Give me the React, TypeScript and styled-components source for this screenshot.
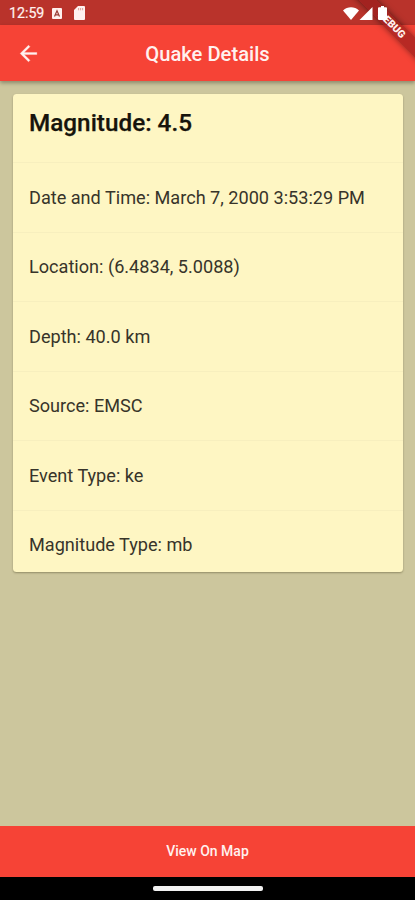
import React from 'react';
import styled, { createGlobalStyle } from 'styled-components';

const GlobalStyle = createGlobalStyle`
  * { box-sizing: border-box; }
  body { margin: 0; font-family: Roboto, 'Liberation Sans', sans-serif; }
`;

const Screen = styled.div`
  position: relative;
  display: flex;
  flex-direction: column;
  width: 415px;
  height: 900px;
  overflow: hidden;
  background: #ccc69d;
`;

const StatusBar = styled.div`
  display: flex;
  align-items: center;
  height: 25px;
  padding: 1px 28px 0 9px;
  background: #b9332b;
  color: #fff1ef;
`;

const Clock = styled.span`
  width: 43px;
  font-size: 14.2px;
  line-height: 20px;
  white-space: nowrap;
  -webkit-text-stroke: 0.2px #fff1ef;
`;

const StatusIcon = styled.svg<{ $left: number }>`
  position: relative;
  z-index: 3;
  display: block;
  flex: none;
  margin-left: ${(p) => p.$left}px;
`;

const Spacer = styled.div`
  flex: 1;
`;

const AppBar = styled.header`
  display: grid;
  grid-template-columns: 57px 1fr 57px;
  align-items: center;
  height: 56px;
  background: #f64336;
  box-shadow: 0 2px 4px rgba(0, 0, 0, 0.32);
  z-index: 1;
`;

const BackButton = styled.button`
  display: flex;
  align-items: center;
  justify-content: center;
  height: 56px;
  padding: 0;
  border: 0;
  background: none;
`;

const Title = styled.h1`
  margin: 0;
  padding-top: 1px;
  color: #fff1ef;
  font-size: 20.2px;
  font-weight: 500;
  line-height: 24px;
  text-align: center;
  white-space: nowrap;
`;

const Content = styled.main`
  flex: 1;
  padding: 13px 12px 0 13px;
`;

const Card = styled.section`
  height: 478px;
  border-radius: 3.5px;
  background: #fef6c3;
  box-shadow: 0 1px 2px rgba(60, 55, 20, 0.4);
  overflow: hidden;
`;

const Heading = styled.h2`
  margin: 0;
  height: 68px;
  padding: 14px 16px 0;
  color: #16140c;
  font-size: 24.3px;
  font-weight: 500;
  line-height: 30px;
  -webkit-text-stroke: 0.25px #16140c;
`;

const Row = styled.div`
  height: 69.6px;
  padding: 22.5px 16px 0;
  border-top: 1px solid #f7efbe;
  color: #37342a;
  font-size: 18.13px;
  line-height: 24px;
  white-space: nowrap;
`;

const MapButton = styled.button`
  height: 51px;
  padding: 0 0 1px;
  border: 0;
  background: #f64336;
  color: #fff1ef;
  font-family: inherit;
  font-size: 14px;
  font-weight: 500;
`;

const NavigationBar = styled.div`
  display: flex;
  justify-content: center;
  height: 23px;
  padding-top: 9px;
  background: #000;
`;

const HomeHandle = styled.div`
  width: 110px;
  height: 5px;
  border-radius: 2px;
  background: #f2f2f2;
`;

const DebugCorner = styled.div`
  position: absolute;
  top: 0;
  right: 0;
  width: 75px;
  height: 75px;
  overflow: hidden;
  z-index: 2;
`;

const DebugRibbon = styled.div`
  position: absolute;
  top: 17.5px;
  left: 1.5px;
  width: 100px;
  height: 13px;
  background: rgba(150, 28, 28, 0.66);
  box-shadow: 0 0 6px rgba(0, 0, 0, 0.5);
  color: #fff1ef;
  font-size: 10.4px;
  font-weight: 900;
  line-height: 13px;
  text-align: center;
  transform: rotate(45deg);
`;

const details = [
  'Date and Time: March 7, 2000 3:53:29 PM',
  'Location: (6.4834, 5.0088)',
  'Depth: 40.0 km',
  'Source: EMSC',
  'Event Type: ke',
  'Magnitude Type: mb',
];

export default function App() {
  return (
    <>
      <GlobalStyle />
      <Screen>
        <StatusBar>
          <Clock>12:59</Clock>
          <StatusIcon $left={0} width="10" height="11" viewBox="0 0 10 11">
            <rect width="10" height="11" rx="1" fill="#fff1ef" />
            <path d="M2.5 8.5 5 2.7l2.5 5.8M3.3 6.8h3.4" fill="none" stroke="#9a3d36" strokeWidth="1.2" />
          </StatusIcon>
          <StatusIcon $left={12} width="11" height="14" viewBox="0 0 11 14">
            <path d="M4 0h6q1 0 1 1v12q0 1-1 1H1q-1 0-1-1V4Z" fill="#fff1ef" />
            <path d="M4.6 2v2.3M6.6 2v2.3M8.6 2v2.3" stroke="#d99b94" strokeWidth=".9" />
          </StatusIcon>
          <Spacer />
          <StatusIcon $left={0} width="16" height="13" viewBox="0 0 16 13">
            <path d="M0 3.500C4.500-.9 11.500-.9 16 3.500L8 13Z" fill="#fff" />
          </StatusIcon>
          <StatusIcon $left={0} width="14" height="13" viewBox="0 0 14 13">
            <path d="M13.500 0v13H.5Z" fill="#fff" />
          </StatusIcon>
          <StatusIcon $left={5} width="9" height="14" viewBox="0 0 9 14">
            <path d="M3 0h3v1.200h2q1 0 1 1V13q0 1-1 1H1q-1 0-1-1V2.200q0-1 1-1h2Z" fill="#fff" />
          </StatusIcon>
        </StatusBar>
        <AppBar>
          <BackButton aria-label="Back">
            <svg width="25" height="25" viewBox="0 0 24 24">
              <path
                d="M20 11H7.830l5.590-5.590L12 4l-8 8 8 8 1.410-1.410L7.830 13H20v-2z"
                fill="#fff1ef"
                stroke="#fff1ef"
                strokeWidth=".3"
              />
            </svg>
          </BackButton>
          <Title>Quake Details</Title>
        </AppBar>
        <Content>
          <Card>
            <Heading>Magnitude: 4.5</Heading>
            {details.map((detail) => (
              <Row key={detail}>{detail}</Row>
            ))}
          </Card>
        </Content>
        <MapButton>View On Map</MapButton>
        <NavigationBar>
          <HomeHandle />
        </NavigationBar>
        <DebugCorner>
          <DebugRibbon>DEBUG</DebugRibbon>
        </DebugCorner>
      </Screen>
    </>
  );
}
